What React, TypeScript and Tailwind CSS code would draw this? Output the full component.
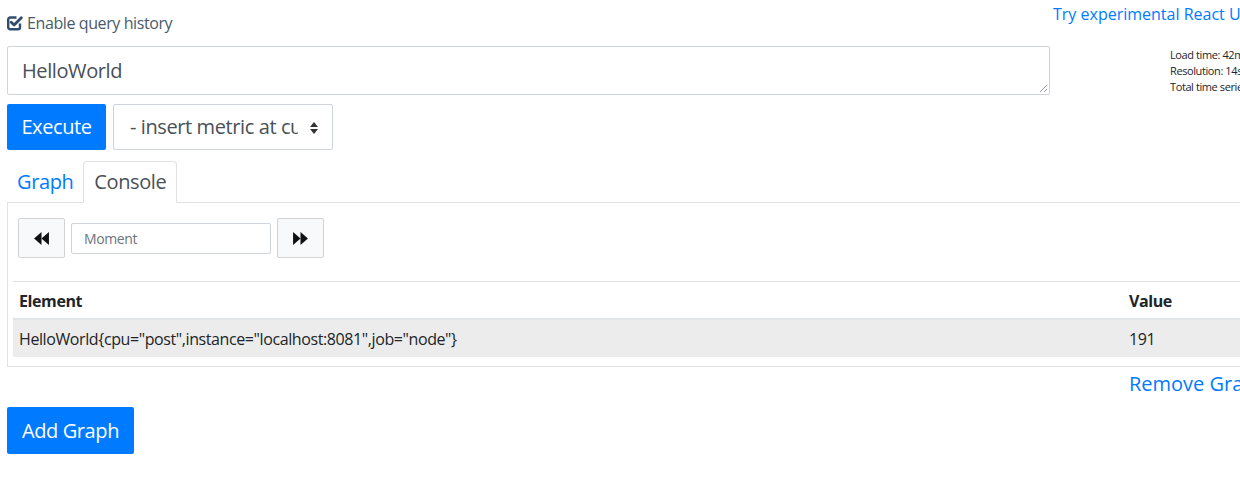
import React from "react";

const font = { fontFamily: '"Open Sans", "Noto Sans", Arial, sans-serif', letterSpacing: "-0.025em" };

function CheckSquare() {
  return (
    <svg width="16" height="16" viewBox="0 0 16 16" className="shrink-0">
      <path d="M13 8.5 V12.3 a2 2 0 0 1 -2 2 H3.2 a2 2 0 0 1 -2 -2 V4.5 a2 2 0 0 1 2 -2 H9.5" fill="none" stroke="#2f4d6e" strokeWidth="2.4" />
      <path d="M4.2 7.2 L7.1 10.1 L14.3 2.8" fill="none" stroke="#2f4d6e" strokeWidth="2.8" strokeLinecap="round" strokeLinejoin="round" />
    </svg>
  );
}

function Backward() {
  return (
    <svg width="15" height="13" viewBox="0 0 16 14">
      <path d="M8 0 V14 L0 7 Z" fill="#111" />
      <path d="M16 0 V14 L8 7 Z" fill="#111" />
    </svg>
  );
}

function Forward() {
  return (
    <svg width="15" height="13" viewBox="0 0 16 14">
      <path d="M0 0 V14 L8 7 Z" fill="#111" />
      <path d="M8 0 V14 L16 7 Z" fill="#111" />
    </svg>
  );
}

export default function App() {
  return (
    <div className="w-[1240px] h-[482px] overflow-hidden bg-white text-[#212529]" style={font}>
      <div className="w-[1340px] pl-[7px]">
        {/* top row */}
        <div className="flex h-[46px]">
          <div className="flex items-start gap-[4px] pt-[13px] w-[1046px]">
            <div className="pt-[2px]"><CheckSquare /></div>
            <span className="text-[16px] leading-[20px] text-[#4a5a6a]">Enable query history</span>
          </div>
          <a className="text-[16px] leading-[24px] text-[#007bff] pt-[2px] whitespace-nowrap tracking-normal">Try experimental React UI</a>
        </div>

        {/* textarea + stats */}
        <div className="flex">
          <div className="relative w-[1043px] h-[49px] border border-[#ced4da] rounded-[2px] px-[14px] flex items-center">
            <span className="text-[20px] text-[#495057]">HelloWorld</span>
            <svg className="absolute right-[1px] bottom-[1px]" width="9" height="9" viewBox="0 0 9 9">
              <path d="M8 1 L1 8 M8 5 L5 8" stroke="#999" strokeWidth="1" />
            </svg>
          </div>
          <div className="ml-[120px] pt-[1px] text-[11px] leading-[16px] text-[#212529] whitespace-nowrap">
            <div>Load time: 42ms</div>
            <div>Resolution: 14s</div>
            <div>Total time series: 1</div>
          </div>
        </div>

        {/* execute row */}
        <div className="flex gap-[7px] mt-[9px]">
          <button className="w-[99px] h-[46px] bg-[#007bff] text-white text-[20px] rounded-[2px]">Execute</button>
          <div className="relative w-[220px] h-[46px] border border-[#ced4da] rounded-[2px] flex items-center pl-[16px] overflow-hidden">
            <span className="text-[20px] text-[#495057] whitespace-nowrap overflow-hidden w-[168px]">- insert metric at cursor -</span>
            <svg className="absolute right-[14px] top-[17px]" width="8" height="12" viewBox="0 0 8 12">
              <path d="M4 0 L8 5 H0 Z" fill="#333" />
              <path d="M4 12 L8 7 H0 Z" fill="#333" />
            </svg>
          </div>
        </div>

        {/* tabs */}
        <div className="mt-[11px] flex border-b border-[#dee2e6]">
          <div className="px-[9px] py-[5px] border border-transparent text-[20px] leading-[30px] text-[#007bff] -mb-px">Graph</div>
          <div className="px-[10px] py-[5px] border border-[#dee2e6] border-b-white rounded-t-[4px] text-[20px] leading-[30px] text-[#495057] -mb-px bg-white">Console</div>
        </div>

        {/* panel */}
        <div className="border-x border-b border-[#dee2e6] px-[5px] pt-[15px] pb-[9px]">
          <div className="flex items-center gap-[6px] ml-[5px]">
            <button className="w-[47px] h-[40px] bg-[#f8f9fa] border border-[#d3d3d3] rounded-[2px] flex items-center justify-center">
              <Backward />
            </button>
            <div className="w-[200px] h-[31px] border border-[#ced4da] rounded-[2px] flex items-center px-[12px]">
              <span className="text-[14px] text-[#6c757d]">Moment</span>
            </div>
            <button className="w-[47px] h-[40px] bg-[#f8f9fa] border border-[#d3d3d3] rounded-[2px] flex items-center justify-center">
              <Forward />
            </button>
          </div>

          <div className="mt-[23px]">
            <div className="flex border-t border-[#dee2e6] border-b-2 border-b-[#e2e5e8] h-[39px] items-center font-bold text-[16px] pt-[2px]">
              <div className="w-[1116px] pl-[6px]">Element</div>
              <div>Value</div>
            </div>
            <div className="flex bg-[#ececec] h-[37px] items-center text-[16px] text-[#212529]">
              <div className="w-[1116px] pl-[6px]">HelloWorld{'{'}cpu="post",instance="localhost:8081",job="node"{'}'}</div>
              <div>191</div>
            </div>
          </div>
        </div>

        <div className="mt-[2px] pl-[1122px] text-[20px] leading-[30px] text-[#007bff] whitespace-nowrap tracking-normal">Remove Graph</div>

        <button className="mt-[8px] w-[127px] h-[47px] bg-[#007bff] text-white text-[20px] rounded-[2px]">Add Graph</button>
      </div>
    </div>
  );
}
